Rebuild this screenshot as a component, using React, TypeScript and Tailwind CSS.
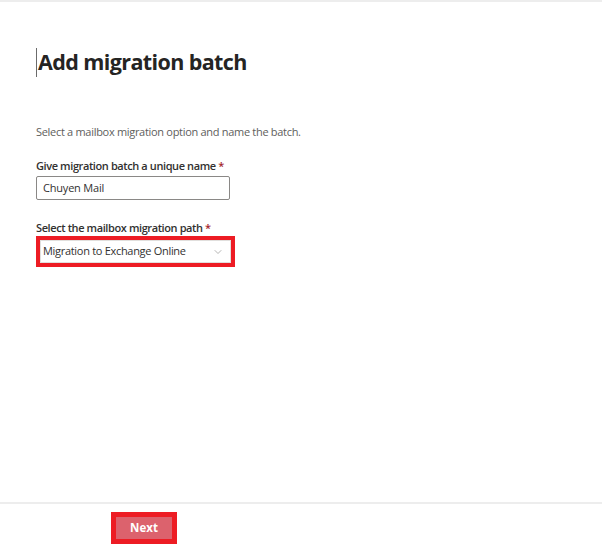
import { ChevronDown } from 'lucide-react';

export default function App() {
  return (
    <div className="flex h-[545px] w-[602px] flex-col overflow-hidden border-t-2 border-[#ededed] bg-white font-['Open_Sans',sans-serif] text-[#323130]">
      <div className="flex-1 pl-[36px]">
        <h1 className="mt-[45px] flex h-[30px] items-center text-[21.5px] font-bold leading-[30px] tracking-[-0.6px] text-[#252423]">
          <span className="mr-px h-[29px] w-px bg-[#6b6b6b]" />
          Add migration batch
        </h1>

        <p className="mt-[47px] text-[11px] leading-[16px] tracking-[-0.3px] text-[#605e5c]">Select a mailbox migration option and name the batch.</p>

        <label className="mt-[18px] block text-[11px] font-semibold leading-[16px] tracking-[-0.4px]">
          Give migration batch a unique name <span className="text-[#a4262c]">*</span>
        </label>
        <div className="mt-[2px] flex h-[24px] w-[194px] items-center rounded-[2px] border border-[#8a8886] px-[6px] text-[11px] tracking-[-0.2px] text-[#323130]">Chuyen Mail</div>

        <label className="mt-[20px] block text-[11px] font-semibold leading-[16px] tracking-[-0.4px]">
          Select the mailbox migration path <span className="text-[#a4262c]">*</span>
        </label>
        <div className="w-[199px] border-4 border-[#ed1c24]">
          <div className="flex h-[23px] items-center justify-between border border-[#e1dfdd] pl-[2px] pr-[6px] text-[11px] tracking-[-0.3px] text-[#323130]">
            <span>Migration to Exchange Online</span>
            <ChevronDown className="h-[12px] w-[12px] text-[#8a8886]" strokeWidth={1.25} />
          </div>
        </div>
      </div>

      <div className="h-[43px] border-t-2 border-[#ededed] pl-[111px] pt-[8px]">
        <div className="inline-block border-[5px] border-[#ed1c24]">
          <button className="flex h-[22px] w-[56px] items-center justify-center bg-[#dc626d] text-[11.5px] font-bold text-white">Next</button>
        </div>
      </div>
    </div>
  );
}
